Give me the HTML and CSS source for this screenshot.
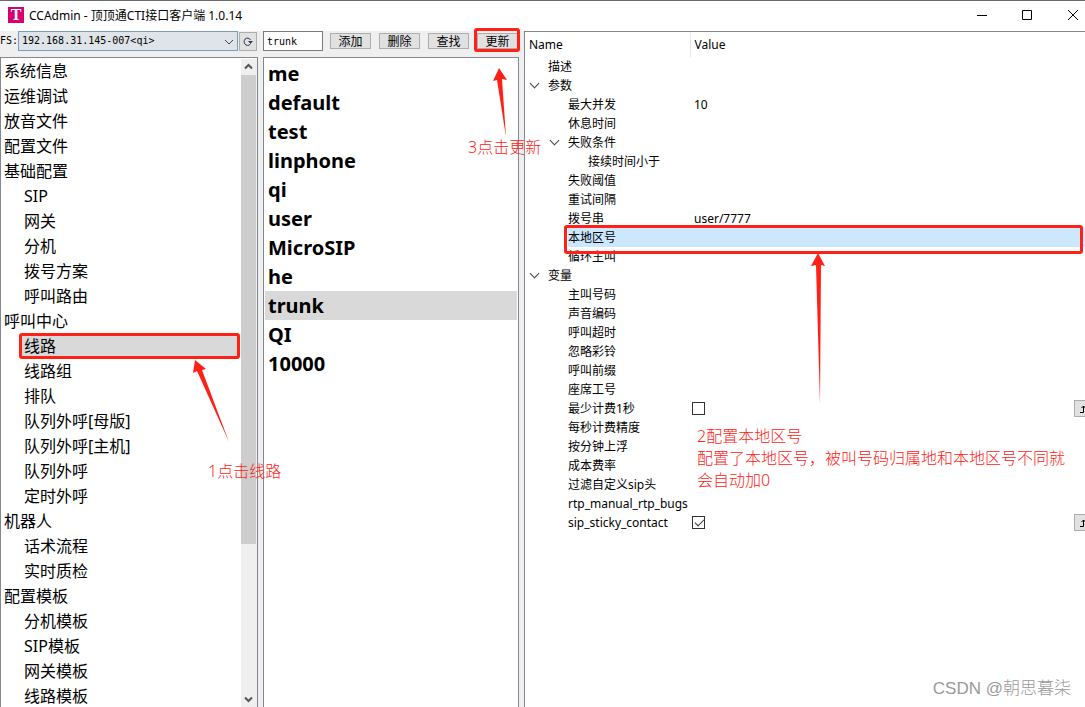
FILE: index.html
```html
<!DOCTYPE html>
<html lang="zh-CN">
<head>
<meta charset="utf-8">
<title>CCAdmin - 顶顶通CTI接口客户端 1.0.14</title>
<link rel="stylesheet" href="styles.css">
</head>
<body>
<div class="window">
  <header class="titlebar">
    <span class="logo">T</span>
    <h1 class="title">CCAdmin - 顶顶通CTI接口客户端 1.0.14</h1>
    <div class="window-buttons">
      <button class="window-button" aria-label="最小化"><svg width="12" height="12" viewBox="0 0 12 12"><path d="M1 6.5h10" stroke="#000" fill="none"/></svg></button>
      <button class="window-button" aria-label="最大化"><svg width="12" height="12" viewBox="0 0 12 12"><path d="M1.5 1.5h9v9h-9z" stroke="#000" fill="none"/></svg></button>
      <button class="window-button" aria-label="关闭"><svg width="12" height="12" viewBox="0 0 12 12"><path d="M1 1l10 10M11 1L1 11" stroke="#000" fill="none"/></svg></button>
    </div>
  </header>

  <main class="workspace">
    <section class="pane nav-pane">
      <div class="toolbar server-bar">
        <label class="server-label" for="server">FS:</label>
        <div class="select-wrap">
          <select id="server" class="server-select"><option>192.168.31.145-007&lt;qi&gt;</option></select>
          <svg class="select-arrow" width="10" height="6" viewBox="0 0 10 6"><path d="M1 1l4 4 4-4" stroke="#444" fill="none"/></svg>
        </div>
        <button class="push refresh" aria-label="刷新"><svg width="10" height="9" viewBox="0 0 10 9"><path d="M7.500 3C6.500 .8 3.500 .5 2 2.200S1 7 3 8s4 .2 4.500-1.500" stroke="#2b3550" fill="none"/><path d="M5 4h5L7.500 6.800z" fill="#2b3550"/></svg></button>
      </div>
      <div class="box nav-box">
        <ul class="nav">
          <li><a href="#">系统信息</a></li>
          <li><a href="#">运维调试</a></li>
          <li><a href="#">放音文件</a></li>
          <li><a href="#">配置文件</a></li>
          <li><a href="#">基础配置</a>
            <ul>
              <li><a href="#">SIP</a></li>
              <li><a href="#">网关</a></li>
              <li><a href="#">分机</a></li>
              <li><a href="#">拨号方案</a></li>
              <li><a href="#">呼叫路由</a></li>
            </ul>
          </li>
          <li><a href="#">呼叫中心</a>
            <ul>
              <li><a href="#" class="selected">线路</a></li>
              <li><a href="#">线路组</a></li>
              <li><a href="#">排队</a></li>
              <li><a href="#">队列外呼[母版]</a></li>
              <li><a href="#">队列外呼[主机]</a></li>
              <li><a href="#">队列外呼</a></li>
              <li><a href="#">定时外呼</a></li>
            </ul>
          </li>
          <li><a href="#">机器人</a>
            <ul>
              <li><a href="#">话术流程</a></li>
              <li><a href="#">实时质检</a></li>
            </ul>
          </li>
          <li><a href="#">配置模板</a>
            <ul>
              <li><a href="#">分机模板</a></li>
              <li><a href="#">SIP模板</a></li>
              <li><a href="#">网关模板</a></li>
              <li><a href="#">线路模板</a></li>
            </ul>
          </li>
        </ul>
        <div class="scrollbar">
          <svg class="scroll-arrow" width="9" height="7" viewBox="0 0 9 7"><path d="M1 5.500l3.500-3.500L8 5.500" stroke="#555" stroke-width="2" fill="none"/></svg>
          <div class="track"><div class="thumb"></div></div>
          <svg class="scroll-arrow" width="9" height="7" viewBox="0 0 9 7"><path d="M1 1.500L4.500 5 8 1.500" stroke="#555" stroke-width="2" fill="none"/></svg>
        </div>
      </div>
    </section>

    <section class="pane trunk-pane">
      <div class="toolbar trunk-bar">
        <input class="trunk-input" type="text" value="trunk" aria-label="线路名称">
        <button class="push">添加</button>
        <button class="push">删除</button>
        <button class="push">查找</button>
        <button class="push">更新</button>
      </div>
      <div class="box">
        <ul class="trunks">
          <li>me</li>
          <li>default</li>
          <li>test</li>
          <li>linphone</li>
          <li>qi</li>
          <li>user</li>
          <li>MicroSIP</li>
          <li>he</li>
          <li class="selected">trunk</li>
          <li>QI</li>
          <li>10000</li>
        </ul>
      </div>
    </section>

    <section class="props-pane">
      <table class="props">
        <colgroup><col class="name-col"><col></colgroup>
        <thead><tr><th>Name</th><th>Value</th></tr></thead>
        <tbody>
          <tr><td class="l1">描述</td><td></td></tr>
          <tr><td class="l1 open">参数</td><td></td></tr>
          <tr><td class="l2">最大并发</td><td>10</td></tr>
          <tr><td class="l2">休息时间</td><td></td></tr>
          <tr><td class="l2 open">失败条件</td><td></td></tr>
          <tr><td class="l3">接续时间小于</td><td></td></tr>
          <tr><td class="l2">失败阈值</td><td></td></tr>
          <tr><td class="l2">重试间隔</td><td></td></tr>
          <tr><td class="l2">拨号串</td><td>user/7777</td></tr>
          <tr class="current"><td class="l2">本地区号</td><td></td></tr>
          <tr><td class="l2">循环主叫</td><td></td></tr>
          <tr><td class="l1 open">变量</td><td></td></tr>
          <tr><td class="l2">主叫号码</td><td></td></tr>
          <tr><td class="l2">声音编码</td><td></td></tr>
          <tr><td class="l2">呼叫超时</td><td></td></tr>
          <tr><td class="l2">忽略彩铃</td><td></td></tr>
          <tr><td class="l2">呼叫前缀</td><td></td></tr>
          <tr><td class="l2">座席工号</td><td></td></tr>
          <tr><td class="l2"><label for="min-bill">最少计费1秒</label></td><td><div class="cell"><input id="min-bill" class="check" type="checkbox"><button class="push reset" aria-label="重置"><svg width="10" height="10" viewBox="0 0 10 10"><path d="M1 8.500h3.500V2M2.500 4l2-2 2 2M6.500 2.500H9" stroke="#000" fill="none"/></svg></button></div></td></tr>
          <tr><td class="l2">每秒计费精度</td><td></td></tr>
          <tr><td class="l2">按分钟上浮</td><td></td></tr>
          <tr><td class="l2">成本费率</td><td></td></tr>
          <tr><td class="l2">过滤自定义sip头</td><td></td></tr>
          <tr><td class="l2">rtp_manual_rtp_bugs</td><td></td></tr>
          <tr><td class="l2"><label for="sticky">sip_sticky_contact</label></td><td><div class="cell"><input id="sticky" class="check" type="checkbox" checked><button class="push reset" aria-label="重置"><svg width="10" height="10" viewBox="0 0 10 10"><path d="M1 8.500h3.500V2M2.500 4l2-2 2 2M6.500 2.500H9" stroke="#000" fill="none"/></svg></button></div></td></tr>
        </tbody>
      </table>
    </section>
  </main>

  <svg class="arrows" width="1085" height="707" viewBox="0 0 1085 707" aria-hidden="true">
    <path d="M195 360l11 9-4 1 27 72-32-71-4 2z"/>
    <path d="M499 68l8 12-5-1 4 58-9-57-4 1z"/>
    <path d="M818 253l7 13-4-1-1 139-4-139-5 1z"/>
  </svg>
  <p class="note note-nav">1点击线路</p>
  <p class="note note-update">3点击更新</p>
  <p class="note note-area">2配置本地区号<br>配置了本地区号，被叫号码归属地和本地区号不同就会自动加0</p>
  <div class="frame frame-nav"></div>
  <div class="frame frame-update"></div>
  <div class="frame frame-area"></div>
  <p class="watermark">CSDN @朝思暮柒</p>
</div>
</body>
</html>
```
FILE: styles.css
```css
* { box-sizing: border-box; }

body {
  margin: 0;
  background: #fff;
  color: #000;
  font: 12px/19px "Noto Sans", "Noto Sans CJK SC", sans-serif;
}

ul, p, h1 { margin: 0; padding: 0; }
ul { list-style: none; }
a { color: inherit; text-decoration: none; }

button, input, select {
  margin: 0;
  padding: 0;
  border-radius: 0;
  color: inherit;
  font: inherit;
}

svg { display: block; }

.window {
  position: relative;
  display: flex;
  flex-direction: column;
  height: 100vh;
  overflow: hidden;
}

/* Title bar */
.titlebar {
  display: flex;
  flex: none;
  align-items: center;
  height: 31px;
  padding: 0 0 2px 8px;
  border-top: 1px solid #6c6a6c;
}

.logo {
  width: 16px;
  height: 16px;
  background: #d8006f;
  color: #fff;
  font: 700 16px/16px "Liberation Serif", serif;
  text-align: center;
}

.title {
  flex: 1;
  padding-left: 5px;
  font-size: 12px;
  font-weight: 400;
}

.window-buttons {
  display: flex;
  margin-right: -9px;
}

.window-button {
  display: flex;
  align-items: center;
  justify-content: center;
  width: 45px;
  height: 28px;
  border: 0;
  background: none;
}

.window-button:last-child { padding-left: 2px; }

/* Panes */
.workspace {
  display: grid;
  flex: 1;
  grid-template-columns: 258px 256px 1fr;
  column-gap: 5px;
  min-height: 0;
  background: #efefef;
}

.pane {
  display: flex;
  flex-direction: column;
  min-width: 0;
  min-height: 0;
}

.toolbar {
  display: flex;
  flex: none;
  align-items: center;
  height: 26px;
  padding-bottom: 6px;
}

.box {
  display: flex;
  flex: 1;
  min-height: 0;
  padding: 1px;
  border: 1px solid #828790;
  border-bottom: 0;
  background: #fff;
  overflow: hidden;
}

.push {
  display: flex;
  align-items: center;
  justify-content: center;
  height: 16px;
  border: 1px solid #adadad;
  background: #e1e1e1;
}

.server-label {
  width: 18px;
  font: 10px/20px "DejaVu Sans Mono", monospace;
  white-space: nowrap;
}

.select-wrap {
  position: relative;
  flex: 1;
}

.server-select {
  display: block;
  width: 100%;
  height: 20px;
  padding-left: 3px;
  border: 1px solid #7a9cb8;
  background: #dfe4e8;
  font: 10px/18px "DejaVu Sans Mono", monospace;
  appearance: none;
}

.select-arrow {
  position: absolute;
  top: 8px;
  right: 4px;
}

.refresh {
  width: 18px;
  height: 19px;
  margin: 0 1px;
}

/* Navigation tree */
.nav-box { padding: 1px 0 0; }

.nav {
  flex: 1;
  padding-right: 2px;
  font-size: 16px;
  line-height: 25px;
}

.nav a {
  display: block;
  height: 25px;
  padding-left: 3px;
}

.nav ul { padding-left: 20px; }
.selected { background: #d9d9d9; }

.scrollbar {
  display: flex;
  flex-direction: column;
  align-items: center;
  width: 16px;
  padding-right: 1px;
  background: #efefef;
}

.scroll-arrow { margin: 4px 0; }

.track {
  flex: 1;
  width: 100%;
  padding-top: 1px;
}

.thumb {
  height: 76%;
  background: #cdcdcd;
}

/* Trunk list */
.trunk-bar { gap: 8px; }

.trunk-input {
  width: 60px;
  height: 20px;
  padding-left: 3px;
  border: 1px solid #7a7a7a;
  background: #fff;
  font: 10px/18px "DejaVu Sans Mono", monospace;
}

.trunk-bar .push { width: 41px; }
.trunk-input + .push { margin-left: -1px; }

.trunks {
  flex: 1;
  font-size: 20px;
  font-weight: 700;
  line-height: 29px;
}

.trunks li {
  height: 29px;
  padding-left: 3px;
}

/* Property grid */
.props-pane {
  min-width: 0;
  border-top: 1px solid #828790;
  border-left: 1px solid #828790;
  background: #fff;
  overflow: hidden;
}

.props {
  width: 100%;
  border-collapse: collapse;
  table-layout: fixed;
}

.name-col { width: 165px; }

.props th {
  height: 25px;
  padding: 0 4px;
  font-weight: 400;
  text-align: left;
}

.props th + th { border-left: 1px solid #e5e5e5; }

.props td {
  height: 19px;
  padding: 0 0 0 4px;
  line-height: 19px;
  white-space: nowrap;
}

.props .l1 { padding-left: 23px; }
.props .l2 { padding-left: 43px; }
.props .l3 { padding-left: 63px; }

.open::before {
  content: "";
  display: inline-block;
  width: 6px;
  height: 6px;
  margin: 0 10px 3px -17px;
  border: solid #444;
  border-width: 0 1px 1px 0;
  transform: rotate(45deg);
}

.current td { background: #cce8ff; }
.current .l2 { background-clip: content-box; }

.cell {
  display: flex;
  align-items: center;
  justify-content: space-between;
  height: 19px;
  margin-left: -2px;
}

.check {
  width: 13px;
  height: 13px;
  border: 1px solid #333;
  background: #fff;
  appearance: none;
}

.check:checked::after {
  content: "";
  display: block;
  width: 8px;
  height: 4px;
  margin: 2px 0 0 2px;
  border: solid #333;
  border-width: 0 0 1px 1px;
  transform: rotate(-45deg);
}

.reset {
  justify-content: flex-start;
  width: 20px;
  height: 17px;
  margin-right: -9px;
  padding-left: 4px;
}

/* Annotations above the window */
.arrows {
  position: absolute;
  top: 0;
  left: 0;
  fill: #ff2116;
  pointer-events: none;
}

.note {
  position: absolute;
  color: #ff2116;
  font-size: 16px;
  font-weight: 300;
  line-height: 22px;
}

.note-nav { top: 460px; left: 208px; }
.note-update { top: 136px; left: 468px; }
.note-area { top: 425px; left: 697px; width: 372px; }

.frame {
  position: absolute;
  border: 3px solid #ff2116;
  border-radius: 3px;
  pointer-events: none;
}

.frame-nav { top: 333px; left: 19px; width: 221px; height: 26px; }
.frame-update { top: 28px; left: 474px; width: 46px; height: 24px; }
.frame-area { top: 225px; right: 2px; left: 564px; height: 29px; }

.watermark {
  position: absolute;
  right: 14px;
  bottom: 6px;
  color: #999;
  font: 300 17px/24px "Liberation Sans", "Noto Sans CJK SC", sans-serif;
}
```
